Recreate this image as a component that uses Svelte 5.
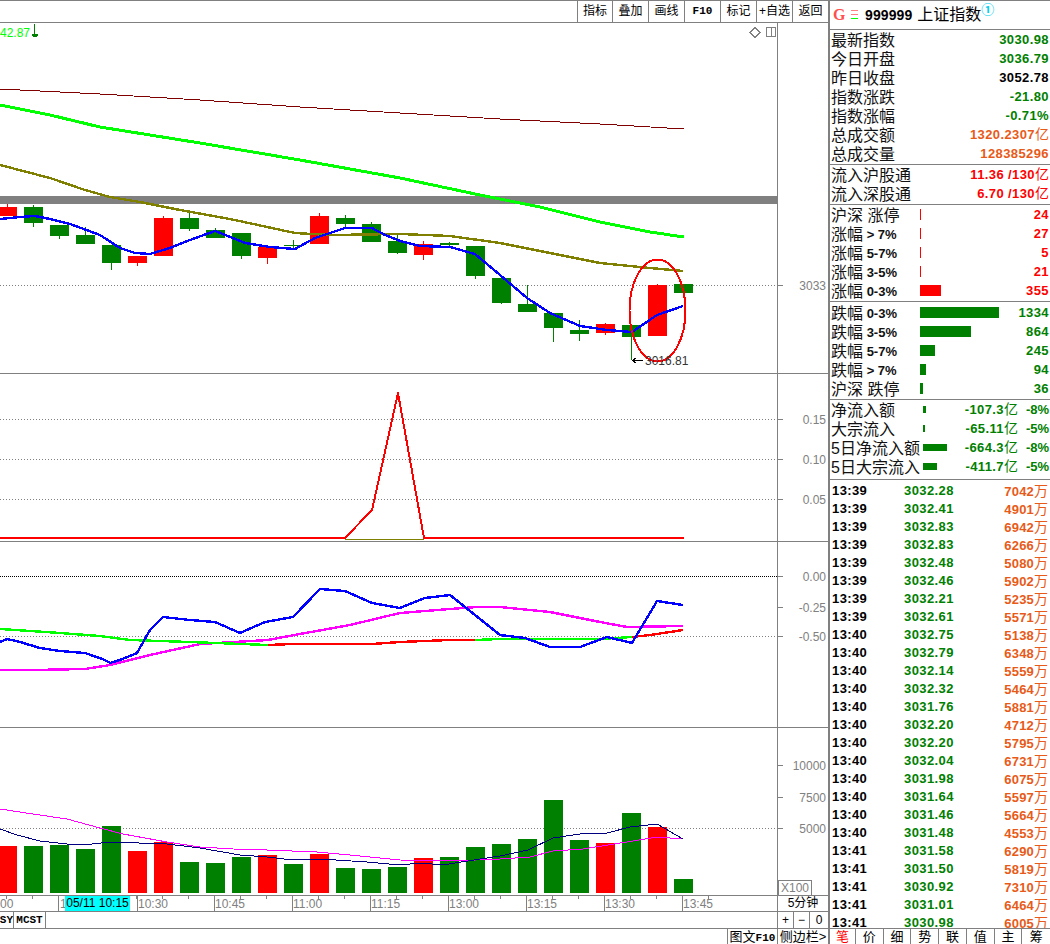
<script>
  const G = '#008000', R = '#ff0000';
  // [colour, bodyTop, bodyBottom, wickTop, wickBottom]
  const candles = [
    ['r',207,216,204,216],['g',207,223,205,227],['g',225,236,225,239],['g',235,244,227,244],
    ['g',245,263,245,270],['r',256,263,256,266],['r',218,256,216,256],['g',218,229,213,231],
    ['g',230,238,228,238],['g',233,256,233,259],['r',247,258,247,264],['g',245,246,240,249],
    ['r',216,244,213,244],['g',218,224,215,228],['g',224,242,222,242],['g',241,253,233,254],
    ['r',244,255,241,260],['g',243,245,242,246],['g',246,276,246,279],['g',278,303,278,304],
    ['g',304,312,285,312],['g',313,328,313,342],['g',330,334,320,341],['r',324,333,323,335],
    ['g',325,337,325,360],['r',285,336,284,336],['g',284,293,284,293]
  ];
  const volumes = [
    ['r',846],['g',846],['g',845],['g',849],['g',826],['r',851],['r',842],['g',862],['g',863],
    ['g',857],['r',855],['g',864],['r',854],['g',868],['g',869],['g',867],['r',858],['g',857],
    ['g',847],['g',844],['g',839],['g',800],['g',840],['r',843],['g',813],['r',827],['g',879]
  ];
  const cx = (i) => -2 + 26 * i;
  const col = (c) => (c === 'r' ? R : G);

  const maBrown = '0,89 100,94 200,100 300,107 400,113 500,119 600,124 684,129';
  const maLime = '0,105 50,115 100,127 200,143 300,160 400,178 480,195 540,207 600,222 650,232 684,237';
  const maOlive = '0,165 50,178 85,190 110,197 140,202 180,210 230,219 295,233 330,235 400,234 450,236 500,243 550,253 600,263 650,268 683,271';
  const maBlue = '0,219 20,217 35,216 50,219 70,224 100,235 120,248 135,253 150,254 170,248 190,240 215,231 225,235 245,243 270,247 295,249 315,238 345,228 372,228 385,235 400,241 420,246 450,247 475,254 500,275 527,298 550,313 580,326 607,330 632,332 657,315 683,306';

  const macdGreenA = '0,629 30,631 60,633 100,636 130,640 190,642 268,645';
  const macdRedA = '268,645 293,644 372,644 400,642 425,641 450,640 475,640';
  const macdGreenB = '475,640 500,639 560,639 600,639 632,637';
  const macdRedB = '632,637 650,635 670,632 683,630';
  const macdMagenta = '0,670 33,670 85,669 110,665 150,655 200,644 268,640 300,634 350,625 400,613 450,609 477,607 500,607 550,612 600,622 627,627 683,626';
  const macdBlue = '0,642 7,639 20,642 40,648 60,651 85,653 105,660 110,663 120,660 137,653 150,630 163,617 190,620 215,622 240,633 265,622 293,617 320,589 345,591 372,603 400,608 425,598 450,595 500,635 525,638 550,647 580,647 607,637 632,643 657,601 683,605';

  const volMagenta = '0,809 33,814 67,819 100,828 123,834 167,842 200,847 233,849 267,850 317,852 350,855 400,860 450,861 500,859 530,857 553,851 583,849 633,841 657,837 683,839';
  const volNavy = '0,829 17,835 40,841 67,844 83,845 110,842 167,844 200,848 240,855 267,857 293,860 320,859 367,862 400,865 420,863 443,865 480,859 500,856 528,850 553,838 580,834 607,833 630,827 657,824 683,839';

  const tools = [['指标',35],['叠加',36],['画线',36],['F10',36],['标记',36],['+自选',36],['返回',36]];
  const axisMajor = [
    [137,'10:30'],[214,'10:45'],[292,'11:00'],[370,'11:15'],[448,'13:00'],[526,'13:15'],[604,'13:30'],[682,'13:45']
  ];
  const axisMinor = Array.from({ length: 28 }, (_, i) => 6 + 26 * i);

  const quote = [
    ['最新指数','3030.98','down'],['今日开盘','3036.79','down'],['昨日收盘','3052.78','flat'],
    ['指数涨跌','-21.80','down'],['指数涨幅','-0.71%','down'],['总成交额','1320.2307亿','amt'],['总成交量','128385296','amt']
  ];
  const flows = [['流入沪股通','11.36 /130亿'],['流入深股通','6.70 /130亿']];
  const rise = [['沪深 涨停','',1,'24'],['涨幅',' > 7%',1,'27'],['涨幅',' 5-7%',1,'5'],['涨幅',' 3-5%',1,'21'],['涨幅',' 0-3%',21,'355']];
  const fall = [['跌幅',' 0-3%',79,'1334'],['跌幅',' 3-5%',51,'864'],['跌幅',' 5-7%',15,'245'],['跌幅',' > 7%',6,'94'],['沪深 跌停','',3,'36']];
  const money = [
    ['净流入额',3,'-107.3亿','-8%'],['大宗流入',2,'-65.11亿','-5%'],
    ['5日净流入额',24,'-664.3亿','-8%'],['5日大宗流入',14,'-411.7亿','-5%']
  ];
  const ticks = [
    ['13:39','3032.28','7042'],['13:39','3032.41','4901'],['13:39','3032.83','6942'],['13:39','3032.83','6266'],
    ['13:39','3032.48','5080'],['13:39','3032.46','5902'],['13:39','3032.21','5235'],['13:39','3032.61','5571'],
    ['13:40','3032.75','5138'],['13:40','3032.79','6348'],['13:40','3032.14','5559'],['13:40','3032.32','5464'],
    ['13:40','3031.76','5881'],['13:40','3032.20','4712'],['13:40','3032.20','5795'],['13:40','3032.04','6731'],
    ['13:40','3031.98','6075'],['13:40','3031.64','5597'],['13:40','3031.46','5664'],['13:40','3031.48','4553'],
    ['13:41','3031.58','6290'],['13:41','3031.50','5819'],['13:41','3030.92','7310'],['13:41','3031.01','6464'],
    ['13:41','3030.98','6005']
  ];
  const tabs = ['笔','价','细','势','联','值','主','筹'];
  const num = (v) => v.replace('亿', '');
  const unit = (v) => (v.includes('亿') ? '亿' : '');
</script>

{#snippet scale(items)}
  <line x1="777.5" x2="777.5" y1="0" y2="944" class="rule" />
  {#each items as [y, label]}
    <line x1="778" x2="783" y1={y + 0.5} y2={y + 0.5} class="rule" />
    <text x="826" y={y + 5} text-anchor="end" class="scale-text">{label}</text>
  {/each}
{/snippet}

<div class="screen">
  <div class="main">
    <div class="toolbar">
      {#each tools as [label, w]}
        <div class="tool" class:mono={label === 'F10'} style:width="{w}px">{label}</div>
      {/each}
    </div>

    <div class="pane p1">
      <svg width="828" height="350" viewBox="0 23 828 350" shape-rendering="crispEdges">
        <rect x="0" y="196" width="777" height="8" fill="#808080" />
        <line x1="0" x2="777" y1="285.5" y2="285.5" class="dots" />
        <polyline points={maBrown} stroke="#800000" stroke-width="1" class="ln" />
        <polyline points={maLime} stroke="#00ff00" stroke-width="3" class="ln" />
        {#each candles as [c, t, b, wt, wb], i}
          <rect x={cx(i) + 9} y={wt} width="1" height={wb - wt} fill={col(c)} />
          <rect x={cx(i)} y={t} width="19" height={b - t} fill={col(c)} />
        {/each}
        <polyline points={maOlive} stroke="#808000" stroke-width="2.4" class="ln" />
        <polyline points={maBlue} stroke="#0000ff" stroke-width="2.4" class="ln" />
        <ellipse cx="657.5" cy="310.5" rx="28" ry="51" fill="none" stroke="#ff0000" stroke-width="2" />

        <text x="0" y="37" class="price-hi">42.87</text>
        <path d="M34 24V37M32 34H37V35H36V36H33V35H32Z" stroke="#008000" fill="#008000" stroke-width="1" />
        <path d="M755 27.5L760 32.500L755 37.500L750 32.500Z" fill="none" stroke="#808080" />
        <rect x="766.500" y="27.500" width="9" height="9" fill="none" stroke="#808080" />
        <line x1="771.500" x2="771.500" y1="27" y2="37" stroke="#808080" />

        <path d="M632 360.500H643M632 360.500L636 358M632 360.500L636 363" fill="none" stroke="#000" />
        <text x="645" y="365" class="low-text">3016.81</text>

        {@render scale([[285, '3033']])}
      </svg>
    </div>

    <div class="pane p2">
      <svg width="828" height="167" viewBox="0 374 828 167" shape-rendering="crispEdges">
        {#each [419, 459, 499] as y}
          <line x1="0" x2="777" y1={y + 0.5} y2={y + 0.5} class="dots" />
        {/each}
        <line x1="345" x2="424" y1="539.5" y2="539.5" stroke="#808000" />
        <polyline points="0,538 345,538 372,510 398,393 424,538 684,538" stroke="#ff0000" stroke-width="2" class="ln" />
        {@render scale([[419, '0.15'], [459, '0.10'], [499, '0.05']])}
      </svg>
    </div>

    <div class="pane p3">
      <svg width="828" height="185" viewBox="0 542 828 185" shape-rendering="crispEdges">
        <line x1="0" x2="777" y1="576.5" y2="576.5" class="dots black" />
        <line x1="0" x2="777" y1="636.5" y2="636.5" class="dots" />
        <polyline points={macdMagenta} stroke="#ff00ff" stroke-width="2.4" class="ln" />
        <polyline points={macdGreenA} stroke="#00ff00" stroke-width="2.4" class="ln" />
        <polyline points={macdGreenB} stroke="#00ff00" stroke-width="2.4" class="ln" />
        <polyline points={macdRedA} stroke="#ff0000" stroke-width="2.4" class="ln" />
        <polyline points={macdRedB} stroke="#ff0000" stroke-width="2.4" class="ln" />
        <polyline points={macdBlue} stroke="#0000ff" stroke-width="2.4" class="ln" />
        {@render scale([[576, '0.00'], [607, '-0.25'], [636, '-0.50']])}
      </svg>
    </div>

    <div class="pane p4">
      <svg width="828" height="167" viewBox="0 728 828 167" shape-rendering="crispEdges">
        <line x1="0" x2="777" y1="828.5" y2="828.5" class="dots" />
        {#each volumes as [c, t], i}
          <rect x={cx(i)} y={t} width="19" height={893 - t} fill={col(c)} />
        {/each}
        <polyline points={volMagenta} stroke="#ff00ff" stroke-width="1" class="ln" />
        <polyline points={volNavy} stroke="#000080" stroke-width="1" class="ln" />
        {@render scale([[765, '10000'], [797, '7500'], [828, '5000']])}
        <rect x="778.500" y="880.500" width="33" height="15" fill="#fff" stroke="#808080" />
        <text x="795" y="892" text-anchor="middle" class="scale-text">X100</text>
      </svg>
    </div>

    <div class="axis">
      <div class="axis-track">
        {#each axisMinor as x}
          <span class="minor" style:left="{x}px"></span>
        {/each}
        <span class="major first" style:left="58px"></span>
        <span class="time" style:left="0">00</span>
        <span class="time" style:left="60px">1</span>
        {#each axisMajor as [x, t]}
          <span class="major" style:left="{x}px"></span>
          <span class="time" style:left="{x + 1}px">{t}</span>
        {/each}
        <span class="cursor">05/11 10:15</span>
      </div>
      <div class="cell period">5分钟</div>
    </div>

    <div class="tabs-row">
      <div class="cell stub"><span>SY</span></div>
      <div class="cell mono mcst">MCST</div>
      <div class="grow"></div>
      <div class="cell zoom">+</div>
      <div class="cell zoom">−</div>
      <div class="cell zoom last">0</div>
    </div>

    <div class="foot-row">
      <div class="grow"></div>
      <div class="cell f10">图文<span class="mono">F10</span></div>
      <div class="cell side">侧边栏&gt;</div>
    </div>
  </div>

  <div class="aside">
    <div class="title">
      <span class="g">G</span>
      <span class="tri"><i class="a"></i><i class="b"></i><i class="c"></i></span>
      <b>999999</b>
      <span class="name">上证指数</span>
      <span class="circ">①</span>
    </div>

    <div class="sec s-quote">
      {#each quote as [k, v, tone]}
        <div class="row"><span class="k">{k}</span><span class="v {tone}">{num(v)}<span class="u">{unit(v)}</span></span></div>
      {/each}
    </div>

    <div class="sec s-flow">
      {#each flows as [k, v]}
        <div class="row"><span class="k">{k}</span><span class="v up">{num(v)}<span class="u">{unit(v)}</span></span></div>
      {/each}
    </div>

    <div class="sec s-rise">
      {#each rise as [k, sub, w, v]}
        <div class="row">
          <span class="k lab">{k}<em>{sub}</em></span>
          <span class="bar-slot"><span class="bar red" style:width="{w}px"></span></span>
          <span class="v up">{v}</span>
        </div>
      {/each}
    </div>

    <div class="sec s-fall">
      {#each fall as [k, sub, w, v]}
        <div class="row">
          <span class="k lab">{k}<em>{sub}</em></span>
          <span class="bar-slot"><span class="bar green" style:width="{w}px"></span></span>
          <span class="v down">{v}</span>
        </div>
      {/each}
    </div>

    <div class="sec s-money">
      {#each money as [k, w, v, p]}
        <div class="row">
          <span class="k mlab">{k}</span>
          <span class="mbar-slot"><span class="mbar" style:width="{w}px"></span></span>
          <span class="v down mval">{num(v)}<span class="u">{unit(v)}</span></span>
          <span class="v down mpct">{p}</span>
        </div>
      {/each}
    </div>

    <div class="list">
      {#each ticks as [t, p, q]}
        <div class="tick">
          <span class="t">{t}</span>
          <span class="p">{p}</span>
          <span class="q">{q}<span class="u">万</span></span>
        </div>
      {/each}
    </div>

    <div class="aside-tabs">
      {#each tabs as t, i}
        <div class="atab" class:on={i === 0}>{t}</div>
      {/each}
    </div>
  </div>
</div>

<style>
  :global(body) { margin: 0; background: #fff; }

  .screen {
    display: flex;
    width: 1050px;
    height: 944px;
    overflow: hidden;
    background: #fff;
    color: #000;
    font-family: "Liberation Sans", "Noto Sans CJK SC", sans-serif;
  }

  .main {
    display: flex;
    flex-direction: column;
    width: 828px;
    flex: none;
    border-right: 2px solid #808080;
    box-sizing: content-box;
  }

  .toolbar {
    display: flex;
    justify-content: flex-end;
    height: 21px;
    border-top: 1px solid #808080;
    border-bottom: 1px solid #808080;
    flex: none;
  }
  .tool {
    box-sizing: border-box;
    border-left: 1px solid #808080;
    font-size: 12px;
    line-height: 21px;
    text-align: center;
  }
  .mono { font-family: "Liberation Mono", monospace; font-weight: bold; font-size: 11px; }

  .pane { flex: none; border-bottom: 1px solid #808080; }
  .pane svg { display: block; overflow: hidden; }
  .p1 { height: 350px; }
  .p2 { height: 167px; }
  .p3 { height: 185px; }
  .p4 { height: 167px; border-bottom: 0; }

  .ln { fill: none; stroke-linejoin: round; }
  .rule { stroke: #808080; stroke-width: 1; }
  .dots { stroke: #808080; stroke-width: 1; stroke-dasharray: 1 2; }
  .dots.black { stroke: #000; stroke-dasharray: 1 1; }
  .scale-text { fill: #808080; font-size: 12px; font-family: "Liberation Sans", sans-serif; }
  .price-hi { fill: #00ff00; font-size: 12px; font-family: "Liberation Sans", sans-serif; }
  .low-text { fill: #333; font-size: 12px; font-family: "Liberation Sans", sans-serif; }

  .axis {
    display: flex;
    height: 15px;
    border-top: 1px solid #808080;
    border-bottom: 1px solid #808080;
    flex: none;
  }
  .axis-track {
    position: relative;
    width: 777px;
    overflow: hidden;
    flex: none;
  }
  .minor { position: absolute; top: 0; width: 1px; height: 3px; background: #808080; }
  .major { position: absolute; top: 0; width: 1px; height: 15px; background: #808080; }
  .time {
    position: absolute;
    top: 0;
    font-size: 12px;
    line-height: 16px;
    color: #808080;
  }
  .cursor {
    position: absolute;
    left: 65px;
    top: 0;
    width: 65px;
    height: 15px;
    background: #00ffff;
    color: #000;
    font-size: 12px;
    line-height: 15px;
    text-align: center;
  }

  .cell {
    box-sizing: border-box;
    border-left: 1px solid #808080;
    text-align: center;
    font-size: 12px;
    flex: none;
  }
  .grow { flex: 1; }
  .period { width: 51px; line-height: 15px; font-size: 12px; }

  .tabs-row {
    display: flex;
    height: 16px;
    border-bottom: 1px solid #808080;
    flex: none;
  }
  .stub {
    width: 13px;
    border-left: 0;
    display: flex;
    justify-content: flex-end;
  }
  .stub span {
    font-family: "Liberation Mono", monospace;
    font-weight: bold;
    font-size: 11px;
    line-height: 16px;
    white-space: nowrap;
  }
  .mcst { width: 33px; border-right: 1px solid #808080; line-height: 16px; font-size: 11px; }
  .zoom { width: 16px; line-height: 16px; }
  .zoom.last { width: 19px; }

  .foot-row { display: flex; height: 15px; flex: none; }
  .f10 { width: 50px; line-height: 15px; font-size: 13px; }
  .side { width: 51px; line-height: 15px; font-size: 13px; white-space: nowrap; }

  .aside {
    display: flex;
    flex-direction: column;
    width: 220px;
    flex: none;
    font-size: 16px;
  }

  .title {
    display: flex;
    align-items: center;
    border-top: 1px solid #808080;
    border-bottom: 1px solid #808080;
    box-sizing: content-box;
    height: 27px;
    padding-left: 3px;
    padding-bottom: 1px;
    flex: none;
  }
  .g {
    color: #ff5050;
    font-family: "Liberation Serif", serif;
    font-weight: bold;
    font-size: 16px;
    width: 18px;
  }
  .tri { display: flex; flex-direction: column; gap: 3px; width: 8px; margin-right: 6px; }
  .tri i { display: block; height: 1px; width: 7px; }
  .tri .a { background: #ff8080; }
  .tri .b { background: #ff8080; }
  .tri .c { background: #00ff00; }
  .title b { font-size: 14px; letter-spacing: 0.1px; margin-right: 5px; }
  .name { font-size: 16px; line-height: 1; }
  .circ {
    color: #00d0f0;
    font-size: 13px;
    font-weight: bold;
    align-self: flex-start;
    margin-top: 1px;
    line-height: 13px;
    font-family: "Noto Sans CJK SC", sans-serif;
  }

  .sec { border-bottom: 1px solid #808080; flex: none; }
  .s-quote { padding-bottom: 1px; }
  .s-flow { padding-bottom: 1px; }
  .s-rise { padding-bottom: 1px; }
  .s-fall { padding: 1px 0; }
  .s-money { padding-bottom: 3px; }

  .row {
    display: flex;
    align-items: center;
    height: 19px;
    line-height: 19px;
    padding-left: 1px;
    white-space: pre;
  }
  .k { font-size: 16px; font-weight: 400; color: #111; padding-top: 2px; }
  .lab { width: 89px; flex: none; }
  .lab em { font-style: normal; font-weight: bold; font-size: 13px; vertical-align: 1px; }
  .v {
    margin-left: auto;
    padding-right: 1px;
    font-weight: bold;
    font-size: 13px;
    letter-spacing: 0.4px;
    text-align: right;
  }
  .u { font-weight: 400; font-size: 14px; letter-spacing: 0; }
  .down { color: #008000; }
  .flat { color: #000; }
  .amt { color: #e85a18; }
  .up { color: #ff0000; }

  .bar-slot { flex: none; width: 80px; display: flex; align-items: center; }
  .bar { display: block; height: 11px; flex: none; }
  .bar.red { background: #ff0000; }
  .bar.green { background: #008000; }

  .mlab { width: 92px; flex: none; white-space: nowrap; }
  .mbar-slot { width: 30px; flex: none; display: flex; align-items: center; }
  .mbar { display: block; height: 7px; background: #008000; flex: none; }
  .mval { margin-left: auto; padding-right: 0; }
  .mpct { margin-left: 7px; width: 24px; flex: none; letter-spacing: 0; }

  .list {
    flex: 1;
    min-height: 0;
    padding-top: 1px;
  }
  .tick {
    display: flex;
    align-items: center;
    height: 18px;
    font-size: 13px;
    font-weight: bold;
    padding-left: 2px;
    letter-spacing: 0.4px;
  }
  .t { width: 72px; flex: none; }
  .p { width: 60px; flex: none; color: #008000; }
  .q { margin-left: auto; padding-right: 2px; color: #e85a18; letter-spacing: 0.2px; }

  .aside-tabs {
    position: relative;
    display: flex;
    height: 15px;
    border-top: 1px solid #808080;
    background: #fff;
    flex: none;
  }
  .atab {
    width: 28px;
    box-sizing: border-box;
    border-right: 1px solid #808080;
    text-align: center;
    font-size: 13px;
    line-height: 16px;
    overflow: hidden;
  }
  .atab:first-child { width: 26px; }
  .atab:last-child { border-right: 0; }
  .atab.on { color: #ff0000; }
</style>
